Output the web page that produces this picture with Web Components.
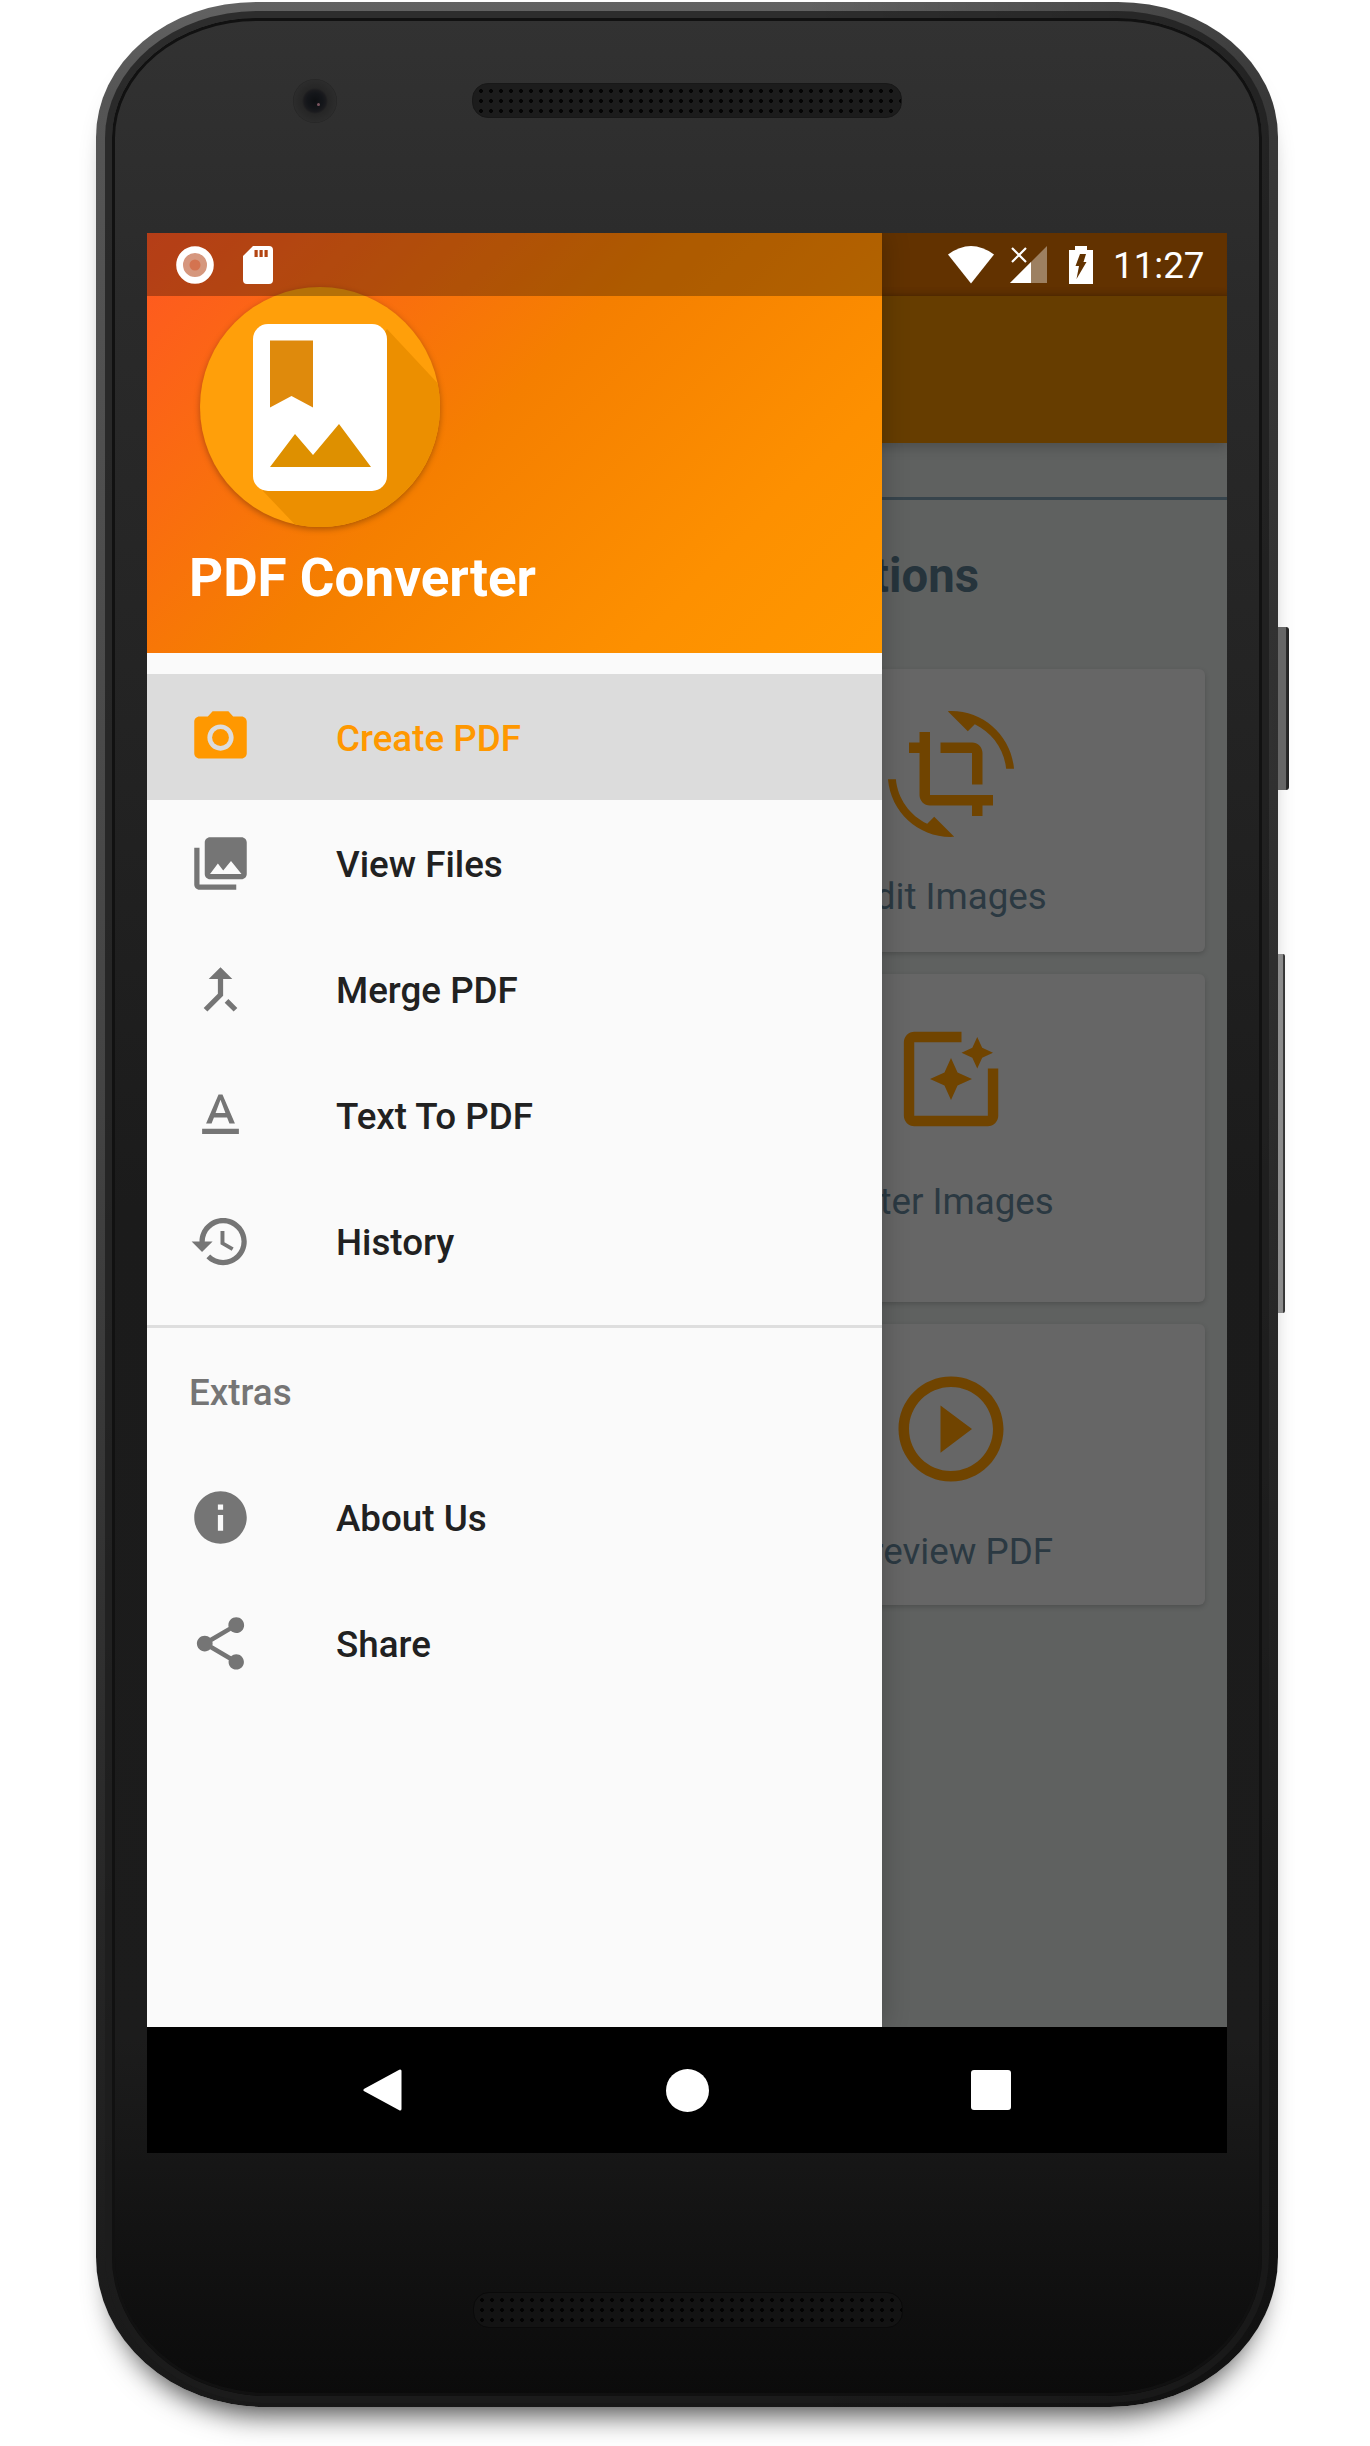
<!doctype html>
<html lang="en">
<head>
<meta charset="UTF-8" />
<title>PDF Converter</title>
<style>
  html, body { margin: 0; background: #fff; }
  body { height: 2446px; overflow: hidden; font-family: Roboto, "Liberation Sans", sans-serif; }
</style>
</head>
<body>

<phone-frame>
  <app-screen>
    <home-content>
      <tool-card icon="crop" label="Edit Images" style="--pb:33px"></tool-card>
      <tool-card icon="filter" label="Filter Images" style="--pb:78px;--shift:6px"></tool-card>
      <tool-card icon="play" label="Preview PDF" style="--pb:31px"></tool-card>
    </home-content>
    <nav-drawer slot="drawer">
      <drawer-item icon="camera" active>Create PDF</drawer-item>
      <drawer-item icon="collections">View Files</drawer-item>
      <drawer-item icon="merge">Merge PDF</drawer-item>
      <drawer-item icon="text">Text To PDF</drawer-item>
      <drawer-item icon="history">History</drawer-item>
      <drawer-section slot="extras">Extras</drawer-section>
      <drawer-item slot="extras" icon="info">About Us</drawer-item>
      <drawer-item slot="extras" icon="share">Share</drawer-item>
    </nav-drawer>
    <nav-bar slot="nav"></nav-bar>
  </app-screen>
</phone-frame>

<script>
  const ICONS = {
    camera: '<circle cx="12" cy="12" r="3.2"/><path d="M9 2L7.17 4H4c-1.1 0-2 .9-2 2v12c0 1.1.9 2 2 2h16c1.1 0 2-.9 2-2V6c0-1.1-.9-2-2-2h-3.17L15 2H9zm3 15c-2.76 0-5-2.24-5-5s2.24-5 5-5 5 2.24 5 5-2.24 5-5 5z"/>',
    collections: '<path d="M22 16V4c0-1.1-.9-2-2-2H8c-1.1 0-2 .9-2 2v12c0 1.1.9 2 2 2h12c1.1 0 2-.9 2-2zm-11-4l2.03 2.71L16 11l4 5H8l3-4zM2 6v14c0 1.1.9 2 2 2h14v-2H4V6H2z"/>',
    merge: '<path d="M17 20.41L18.41 19 15 15.59 13.59 17 17 20.41zM7.5 8H11v5.59L5.59 19 7 20.41l6-6V8h3.5L12 3.5 7.5 8z"/>',
    text: '<path d="M5 17v2h14v-2H5zm4.5-4.2h5l.9 2.2h2.1L12.75 4h-1.5L6.5 15h2.1l.9-2.2zM12 5.98L13.87 11h-3.74L12 5.98z"/>',
    history: '<path d="M13 3c-4.97 0-9 4.03-9 9H1l3.89 3.89.07.14L9 12H6c0-3.87 3.13-7 7-7s7 3.13 7 7-3.13 7-7 7c-1.93 0-3.68-.79-4.94-2.06l-1.42 1.42C8.27 19.99 10.51 21 13 21c4.97 0 9-4.03 9-9s-4.03-9-9-9zm-1 5v5l4.28 2.54.72-1.21-3.5-2.08V8H12z"/>',
    info: '<path d="M12 2C6.48 2 2 6.48 2 12s4.48 10 10 10 10-4.48 10-10S17.52 2 12 2zm1 15h-2v-6h2v6zm0-8h-2V7h2v2z"/>',
    share: '<path d="M18 16.08c-.76 0-1.44.3-1.96.77L8.91 12.7c.05-.23.09-.46.09-.7s-.04-.47-.09-.7l7.05-4.11c.54.5 1.25.81 2.04.81 1.66 0 3-1.34 3-3s-1.34-3-3-3-3 1.34-3 3c0 .24.04.47.09.7L8.04 9.81C7.5 9.31 6.79 9 6 9c-1.66 0-3 1.34-3 3s1.34 3 3 3c.79 0 1.5-.31 2.04-.81l7.12 4.16c-.05.21-.08.43-.08.65 0 1.61 1.31 2.92 2.92 2.92 1.61 0 2.92-1.31 2.92-2.92s-1.31-2.92-2.92-2.92z"/>',
    crop: '<path d="M7.47 21.49C4.2 19.93 1.86 16.76 1.5 13H0c.51 6.16 5.66 11 11.95 11 .23 0 .44-.02.66-.03L8.8 20.15l-1.33 1.34zM12.05 0c-.23 0-.44.02-.66.04l3.81 3.81 1.33-1.33C19.8 4.07 22.14 7.24 22.5 11H24c-.51-6.16-5.66-11-11.95-11zM16 14h2V8c0-1.11-.9-2-2-2h-6v2h6v6zm-8 2V4H6v2H4v2h2v8c0 1.1.89 2 2 2h8v2h2v-2h2v-2H8z"/>',
    filter: '<path d="M19.02 10v9H5V5h9V3H5.02c-1.1 0-2 .9-2 2v14c0 1.1.9 2 2 2H19c1.1 0 2-.9 2-2v-9h-1.98zM17 10l.94-2.06L20 7l-2.06-.94L17 4l-.94 2.06L14 7l2.06.94zm-3.75.75L12 8l-1.25 2.75L8 12l2.75 1.25L12 16l1.25-2.75L16 12z"/>',
    play: '<path d="M10 16.5l6-4.5-6-4.5v9zM12 2C6.48 2 2 6.48 2 12s4.48 10 10 10 10-4.48 10-10S17.52 2 12 2zm0 18c-4.41 0-8-3.59-8-8s3.59-8 8-8 8 3.59 8 8-3.59 8-8 8z"/>'
  };

  class MatIcon extends HTMLElement {
    constructor() {
      super();
      this.attachShadow({ mode: 'open' });
      this.shadowRoot.innerHTML = `
        <style>
          :host { display: block; width: var(--size, 63px); height: var(--size, 63px); flex: none; }
          svg { display: block; width: 100%; height: 100%; fill: currentColor; }
        </style>
        <svg viewBox="0 0 24 24">${ICONS[this.getAttribute('name')] || ''}</svg>`;
    }
  }
  customElements.define('mat-icon', MatIcon);

  class PhoneFrame extends HTMLElement {
    constructor() {
      super();
      this.attachShadow({ mode: 'open' });
      this.shadowRoot.innerHTML = `
        <style>
          :host {
            display: block; position: relative; box-sizing: border-box;
            width: 1182px; height: 2405px; margin: 2px 0 0 96px;
            padding: 16px 16px 11px 16px;
            border-radius: 160px 160px 168px 168px / 135px 135px 150px 150px;
            background:
              linear-gradient(90deg, rgba(0,0,0,0) 0, rgba(0,0,0,0) 60%, rgba(0,0,0,.35) 100%),
              linear-gradient(180deg, #626262 0, #555 4%, #444 45%, #262626 80%, #181818 100%);
            box-shadow: 0 24px 28px -16px rgba(0,0,0,.7);
          }
          .bezel {
            box-sizing: border-box; height: 100%;
            border-radius: 145px 145px 156px 156px / 120px 120px 140px 140px;
            background: linear-gradient(180deg, #323232 0, #2a2a2a 12%, #1b1b1b 50%, #1c1c1c 85%, #0b0b0b 100%);
            box-shadow: inset 0 0 0 3px #111, 0 0 0 7px rgba(28,28,28,.75);
            display: flex; flex-direction: column; align-items: center;
          }
          .top { align-self: stretch; height: 215px; box-sizing: border-box; padding: 61px 0 0 181px; display: flex; gap: 135px; align-items: flex-start; }
          .bottom { align-self: stretch; height: 243px; box-sizing: border-box; padding: 139px 0 0 361px; }
          .camera {
            width: 44px; height: 44px; border-radius: 50%;
            background: radial-gradient(circle at 50% 50%, #0d0f12 0, #14161a 8px, #1b1b1e 11px, #262626 13px, #2c2c2c 21px, #222 22px);
            position: relative;
          }
          .camera::after {
            content: ''; position: absolute; left: 24px; top: 24px; width: 3px; height: 3px;
            border-radius: 50%; background: #7a5560;
          }
          .speaker {
            width: 430px; height: 35px; margin-top: 4px; box-sizing: border-box; border-radius: 16px;
            background-color: #1c1c1c; border: 1px solid #181818;
            background-image: radial-gradient(circle, #050505 1.6px, rgba(0,0,0,0) 2.2px);
            background-size: 10px 10px; background-position: 3px 2px;
          }
          .bottom .speaker { margin: 0; height: 36px; background-color: #131313; border-color: #0a0a0a; background-image: radial-gradient(circle, #030303 1.6px, rgba(0,0,0,0) 2.2px); }
          .power, .volume { position: absolute; left: 1182px; }
          .power { top: 625px; width: 11px; height: 163px; background: linear-gradient(90deg, #666 0, #666 70%, #2a2a2a 75%, #222 100%); border-radius: 0 3px 3px 0; }
          .volume { top: 952px; width: 7px; height: 359px; background: linear-gradient(90deg, #8f8f8f 0, #8a8a8a 65%, #3c3c3c 72%, #333 100%); border-radius: 0 2px 2px 0; }
        </style>
        <div class="bezel">
          <div class="top"><div class="camera"></div><div class="speaker"></div></div>
          <slot></slot>
          <div class="bottom"><div class="speaker"></div></div>
        </div>
        <div class="power"></div><div class="volume"></div>`;
    }
  }
  customElements.define('phone-frame', PhoneFrame);

  class AppScreen extends HTMLElement {
    constructor() {
      super();
      this.attachShadow({ mode: 'open' });
      this.shadowRoot.innerHTML = `
        <style>
          :host { display: flex; flex-direction: column; width: 1080px; height: 1920px; flex: none; overflow: hidden; position: relative; }
          .main { flex: 1; position: relative; overflow: hidden; display: flex; flex-direction: column; min-height: 0; }
        </style>
        <div class="main"><slot></slot><slot name="drawer"></slot></div>
        <slot name="nav"></slot>`;
    }
  }
  customElements.define('app-screen', AppScreen);

  class HomeContent extends HTMLElement {
    constructor() {
      super();
      this.attachShadow({ mode: 'open' });
      this.shadowRoot.innerHTML = `
        <style>
          :host { display: flex; flex-direction: column; flex: 1; background: #5f6160; }
          .status {
            height: 63px; background: #623200; color: #fff; display: flex; align-items: center;
            justify-content: flex-end; padding-right: 22px;
            box-shadow: inset 0 -8px 8px -8px rgba(0,0,0,.25);
          }
          .status svg { display: block; flex: none; }
          .time { font-size: 36.75px; line-height: 44px; margin-left: 20px; width: 92px; white-space: nowrap; margin-top: 2px; }
          .appbar { height: 147px; background: #663d00; box-shadow: 0 4px 12px rgba(0,0,0,.2); position: relative; }
          .line { height: 3px; margin-top: 54px; background: #37444c; }
          h2 {
            margin: 48px 0 65px; padding-right: 248px; text-align: right;
            font-size: 47.25px; line-height: 56px; font-weight: 700; color: #26343c;
          }
          .grid { display: grid; grid-template-columns: 1fr 1fr; gap: 22px; padding: 0 22px; }
          ::slotted(tool-card) { grid-column: 2; }
        </style>
        <div class="status">
          <svg width="46" height="38" viewBox="0 0 46 38"><path fill="#fff" d="M0 8.5Q23 -8.5 46 8.5L23 37.5Z"/></svg>
          <svg style="margin-left:16px" width="37" height="37" viewBox="0 0 37 37">
            <path fill="#fff" opacity=".38" d="M0 37L37 0V37Z"/>
            <path fill="#fff" d="M0 37L21 16V37Z"/>
            <path stroke="#fff" stroke-width="2.2" fill="none" d="M2 2L16 16M16 2L2 16"/>
          </svg>
          <svg style="margin-left:22px" width="24" height="38" viewBox="0 0 24 38">
            <path fill="#fff" d="M6 0H18V4H24V38H0V4H6Z"/>
            <path fill="#623200" d="M11 8H17L14.5 16H17.5L7.5 33L10 20H6.5Z"/>
          </svg>
          <span class="time">11:27</span>
        </div>
        <div class="appbar"></div>
        <div class="line"></div>
        <h2>Options</h2>
        <div class="grid"><slot></slot></div>`;
    }
  }
  customElements.define('home-content', HomeContent);

  class ToolCard extends HTMLElement {
    constructor() {
      super();
      this.attachShadow({ mode: 'open' });
      this.shadowRoot.innerHTML = `
        <style>
          :host {
            display: flex; flex-direction: column; align-items: center;
            padding: 42px 2px var(--pb, 34px) 0; background: #666; border-radius: 6px;
            box-shadow: 0 2px 5px rgba(0,0,0,.18); color: #704400;
            --size: 126px;
          }
          span { margin-top: 38px; padding-right: var(--shift, 0); font-size: 36.75px; line-height: 44px; color: #2b3942; white-space: nowrap; }
        </style>
        <mat-icon name="${this.getAttribute('icon')}"></mat-icon>
        <span>${this.getAttribute('label')}</span>`;
    }
  }
  customElements.define('tool-card', ToolCard);

  class NavDrawer extends HTMLElement {
    constructor() {
      super();
      this.attachShadow({ mode: 'open' });
      this.shadowRoot.innerHTML = `
        <style>
          :host {
            display: flex; flex-direction: column; position: absolute; left: 0; top: 0; bottom: 0; width: 735px;
            background: #fafafa; box-shadow: 0 0 26px rgba(0,0,0,.24);
          }
          header {
            position: relative; height: 420px; box-sizing: border-box; padding: 54px 0 0 53px;
            background: linear-gradient(135deg, #ff5722 0, #f57f00 46%, #fd9000 78%, #ff9800 100%);
          }
          .logo { display: block; filter: drop-shadow(0 2px 3px rgba(0,0,0,.3)); }
          h1 {
            margin: 19px 0 0 -11px; font-size: 53px; line-height: 64px; font-weight: 700; color: #fff; white-space: nowrap;
          }
          .scrim {
            position: absolute; left: 0; top: 0; right: 0; height: 63px; background: rgba(0,0,0,.29);
            display: flex; align-items: center; gap: 29px; padding-left: 29px; box-sizing: border-box;
          }
          .scrim svg { display: block; }
          .items { margin-top: 21px; display: flex; flex-direction: column; }
          hr { margin: 21px 0 0; border: 0; height: 3px; background: #dedede; }
          .extras { display: flex; flex-direction: column; }
        </style>
        <header>
          <svg class="logo" width="240" height="240" viewBox="0 0 240 240">
            <defs><clipPath id="disc"><circle cx="120" cy="120" r="120"/></clipPath></defs>
            <circle cx="120" cy="120" r="120" fill="#ff9f0a"/>
            <path clip-path="url(#disc)" fill="#ec8f00" d="M187 42L245 104V245H102L63 204Z"/>
            <rect x="53" y="37" width="134" height="167" rx="15" fill="#fff"/>
            <path fill="#df8a0c" d="M70 53.5H113V120.5L91.5 109L70 120.5Z"/>
            <path fill="#de9000" d="M70 180L95 147L113 168L139 137L171 180Z"/>
          </svg>
          <h1>PDF Converter</h1>
          <div class="scrim">
            <svg width="38" height="38" viewBox="0 0 38 38">
              <circle cx="19" cy="19" r="15.4" fill="#fff" fill-opacity=".45" stroke="#fff" stroke-width="6.8"/>
              <circle cx="19" cy="19" r="5.5" fill="#d47350"/>
            </svg>
            <svg width="30" height="38" viewBox="0 0 30 38">
              <path fill="#fff" fill-rule="evenodd" d="M10 0H26A4 4 0 0 1 30 4V34A4 4 0 0 1 26 38H4A4 4 0 0 1 0 34V10ZM11.5 4V11H14.7V4ZM16.5 4V11H19.7V4ZM21.5 4V11H24.7V4Z"/>
            </svg>
          </div>
        </header>
        <div class="items"><slot></slot></div>
        <hr />
        <div class="extras"><slot name="extras"></slot></div>`;
    }
  }
  customElements.define('nav-drawer', NavDrawer);

  class DrawerItem extends HTMLElement {
    constructor() {
      super();
      this.attachShadow({ mode: 'open' });
      const active = this.hasAttribute('active');
      this.shadowRoot.innerHTML = `
        <style>
          :host {
            display: flex; align-items: center; height: 126px; padding-left: 42px;
            background: ${active ? '#dcdcdc' : 'transparent'};
          }
          mat-icon { color: ${active ? '#ff9800' : '#757575'}; }
          span { margin-left: 84px; padding-top: 3px; font-size: 36.75px; font-weight: 500; color: ${active ? '#ff9800' : '#212121'}; white-space: nowrap; }
        </style>
        <mat-icon name="${this.getAttribute('icon')}"></mat-icon>
        <span><slot></slot></span>`;
    }
  }
  customElements.define('drawer-item', DrawerItem);

  class DrawerSection extends HTMLElement {
    constructor() {
      super();
      this.attachShadow({ mode: 'open' });
      this.shadowRoot.innerHTML = `
        <style>
          :host { display: flex; align-items: center; height: 126px; box-sizing: border-box; padding: 3px 0 0 42px; font-size: 36.75px; font-weight: 500; color: #757575; }
        </style>
        <slot></slot>`;
    }
  }
  customElements.define('drawer-section', DrawerSection);

  class NavBar extends HTMLElement {
    constructor() {
      super();
      this.attachShadow({ mode: 'open' });
      this.shadowRoot.innerHTML = `
        <style>
          :host { display: flex; height: 126px; flex: none; background: #000; align-items: center; justify-content: center; gap: 262px; }
          svg { display: block; fill: #fff; }
          .back { margin-right: 2px; }
        </style>
        <svg class="back" width="39" height="42" viewBox="0 0 39 42"><path stroke="#fff" stroke-width="3" stroke-linejoin="round" d="M37 2V40L2 21Z"/></svg>
        <svg width="43" height="43" viewBox="0 0 43 43"><circle cx="21.5" cy="21.5" r="21.5"/></svg>
        <svg width="40" height="40" viewBox="0 0 40 40"><rect width="40" height="40" rx="3"/></svg>`;
    }
  }
  customElements.define('nav-bar', NavBar);
</script>
</body>
</html>
